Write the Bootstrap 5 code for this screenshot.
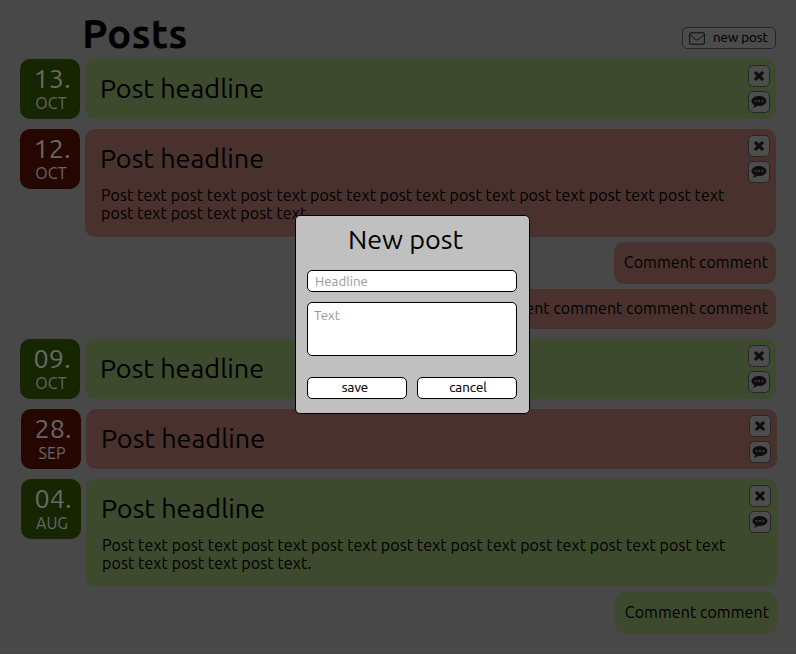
<!DOCTYPE html>
<html lang="en">
<head>
<meta charset="utf-8">
<meta name="viewport" content="width=device-width, initial-scale=1">
<title>Posts</title>
<link href="https://cdn.jsdelivr.net/npm/bootstrap@5.3.0/dist/css/bootstrap.min.css" rel="stylesheet">
<style>
  body { background: #484848; color: #000; font-family: "Ubuntu", "Noto Sans", sans-serif; font-size: 16px; line-height: 18px; height: 654px; overflow: hidden; border-bottom: 2px solid #494449; }
  .board { padding: 0 20px; }
  .board-head { height: 59px; padding-left: 62px; }
  .board-title { font-size: 40.6px; font-weight: 700; line-height: 40px; margin-top: 13px; }
  .tool { border: 1px solid #262626; border-radius: 5px; background: #4b4b4b; color: #000; height: 22px; padding: 0; }
  .new-btn { width: 94px; margin-top: 27px; padding-left: 6px; font-size: 13.3px; line-height: 18px; -webkit-text-stroke: .15px #000; }
  .new-btn span { margin-left: 8px; }
  .tool-sq { width: 22px; background: #4d4d4d; }
  .post-row { gap: 5px; margin-bottom: 10px; }
  .shifted { position: relative; left: 1px; }
  .date-box { width: 60px; height: 60px; border-radius: 10px; padding-top: 4px; color: #686868; }
  .date-day { font-size: 27px; line-height: 31px; padding-left: 13.5px; }
  .date-month { line-height: 18px; padding-left: 2px; }
  .green-date { background: #162600; }
  .red-date { background: #260700; }
  .green-box { background: #3d4a2d; }
  .red-box { background: #49322d; }
  .post-box { border-radius: 10px; min-height: 60px; padding: 11px 6px 0 15px; }
  .post-box h2 { font-size: 27px; line-height: 37px; font-weight: 400; margin: 0; }
  .post-box p { margin: 9px 0 15px 1px; width: 636px; letter-spacing: .095px; }
  .tools { gap: 4px; margin-top: -5px; }
  .reply { border-radius: 10px; padding: 0 8px 0 10px; height: 42px; line-height: 40px; margin-bottom: 5px; letter-spacing: .06px; }
  .reply-last { height: 40px; line-height: 38px; margin-bottom: 10px; }
  .has-replies { margin-bottom: 5px; }
  .dialog-box { position: absolute; left: 295px; top: 215px; width: 235px; height: 199px; background: #c0c0c0; border: 1px solid #000; border-radius: 5px; padding: 5px 12px 0 11px; }
  .dialog-box h2 { font-size: 27px; line-height: 37px; font-weight: 400; padding-right: 13px; margin: 0 0 12px; }
  .field { display: block; width: 210px; height: 22px; border: 1px solid #000; border-radius: 5px; background: #fff; font-size: 13.3px; line-height: 18px; padding: 0 7px; resize: none; outline: none; }
  .field::placeholder { color: #9a9a9a; opacity: 1; }
  .field-area { height: 54px; margin: 10px 0 21px; padding: 4px 6px; }
  .dialog-btn { width: 100px; height: 22px; border: 1px solid #000; border-radius: 5px; background: #fff; color: #000; font-size: 13.3px; line-height: 18px; padding: 0 0 0 2px; -webkit-text-stroke: .15px #000; }
  .save-btn { padding: 0 4px 0 0; }
</style>
</head>
<body>
<svg class="d-none">
  <symbol id="i-x" viewBox="0 0 12 12"><path d="M3 .9 6 3.8 9 .9 11.2 3.1 8.3 6l2.9 2.9L9 11.1 6 8.2 3 11.1.8 8.9 3.7 6 .8 3.1Z" fill="#0e0e0e"/></symbol>
  <symbol id="i-talk" viewBox="0 0 16 14"><path d="M8 1C3.8 1 .5 3.200.5 6c0 1.700 1.100 3.100 2.800 4-.2 1.100-.7 1.900-1.500 2.700 1.900-.1 3.400-.8 4.500-1.900.5.1 1 .1 1.700.1 4.200 0 7.500-2.200 7.500-4.900S12.200 1 8 1Z" fill="#0e0e0e"/><path d="M3.800 5.200h1.800v1.600H3.800zM7.100 5.200h1.800v1.600H7.100zM10.400 5.200h1.800v1.600h-1.800z" fill="#4d4d4d"/></symbol>
</svg>
<main class="board">
  <header class="board-head d-flex justify-content-between align-items-start">
    <h1 class="board-title mb-0">Posts</h1>
    <button class="tool new-btn d-flex align-items-center"><svg width="16" height="13" viewBox="0 0 16 13" fill="none" stroke="#0e0e0e"><rect x=".6" y=".8" width="14.800" height="11.400" rx="1.300"/><path d="M.8 2.500c2 1.900 3.700 3.200 5.700 4.800 1.100.8 1.900.8 3 0 2-1.600 3.700-2.900 5.700-4.800"/></svg><span>new post</span></button>
  </header>

  <section class="post-row d-flex align-items-start">
    <div class="date-box green-date text-center"><div class="date-day text-start">13.</div><div class="date-month">OCT</div></div>
    <article class="post-box green-box flex-grow-1 d-flex justify-content-between align-items-start"><h2>Post headline</h2>
      <div class="tools d-flex flex-column"><button class="tool tool-sq d-flex align-items-center justify-content-center" aria-label="Delete"><svg width="12" height="12"><use href="#i-x"/></svg></button><button class="tool tool-sq d-flex align-items-center justify-content-center" aria-label="Comment"><svg width="16" height="14"><use href="#i-talk"/></svg></button></div></article>
  </section>

  <section class="post-row has-replies d-flex align-items-start">
    <div class="date-box red-date text-center"><div class="date-day text-start">12.</div><div class="date-month">OCT</div></div>
    <article class="post-box red-box flex-grow-1 d-flex justify-content-between align-items-start"><div><h2>Post headline</h2><p>Post text post text post text post text post text post text post text post text post text post text post text post text.</p></div>
      <div class="tools d-flex flex-column"><button class="tool tool-sq d-flex align-items-center justify-content-center" aria-label="Delete"><svg width="12" height="12"><use href="#i-x"/></svg></button><button class="tool tool-sq d-flex align-items-center justify-content-center" aria-label="Comment"><svg width="16" height="14"><use href="#i-talk"/></svg></button></div></article>
  </section>
  <div class="d-flex flex-column align-items-end">
    <div class="reply red-box">Comment comment</div>
    <div class="reply reply-last red-box">Comment comment comment comment</div>
  </div>

  <section class="post-row d-flex align-items-start">
    <div class="date-box green-date text-center"><div class="date-day text-start">09.</div><div class="date-month">OCT</div></div>
    <article class="post-box green-box flex-grow-1 d-flex justify-content-between align-items-start"><h2>Post headline</h2>
      <div class="tools d-flex flex-column"><button class="tool tool-sq d-flex align-items-center justify-content-center" aria-label="Delete"><svg width="12" height="12"><use href="#i-x"/></svg></button><button class="tool tool-sq d-flex align-items-center justify-content-center" aria-label="Comment"><svg width="16" height="14"><use href="#i-talk"/></svg></button></div></article>
  </section>

  <div class="shifted">
    <section class="post-row d-flex align-items-start">
      <div class="date-box red-date text-center"><div class="date-day text-start">28.</div><div class="date-month">SEP</div></div>
      <article class="post-box red-box flex-grow-1 d-flex justify-content-between align-items-start"><h2>Post headline</h2>
        <div class="tools d-flex flex-column"><button class="tool tool-sq d-flex align-items-center justify-content-center" aria-label="Delete"><svg width="12" height="12"><use href="#i-x"/></svg></button><button class="tool tool-sq d-flex align-items-center justify-content-center" aria-label="Comment"><svg width="16" height="14"><use href="#i-talk"/></svg></button></div></article>
    </section>
    <section class="post-row has-replies d-flex align-items-start">
      <div class="date-box green-date text-center"><div class="date-day text-start">04.</div><div class="date-month">AUG</div></div>
      <article class="post-box green-box flex-grow-1 d-flex justify-content-between align-items-start"><div><h2>Post headline</h2><p>Post text post text post text post text post text post text post text post text post text post text post text post text.</p></div>
        <div class="tools d-flex flex-column"><button class="tool tool-sq d-flex align-items-center justify-content-center" aria-label="Delete"><svg width="12" height="12"><use href="#i-x"/></svg></button><button class="tool tool-sq d-flex align-items-center justify-content-center" aria-label="Comment"><svg width="16" height="14"><use href="#i-talk"/></svg></button></div></article>
    </section>
    <div class="d-flex justify-content-end"><div class="reply green-box">Comment comment</div></div>
  </div>
</main>

<div class="dialog-box" role="dialog">
  <h2 class="text-center">New post</h2>
  <input class="field" placeholder="Headline">
  <textarea class="field field-area" placeholder="Text"></textarea>
  <div class="d-flex justify-content-between"><button class="dialog-btn save-btn">save</button><button class="dialog-btn">cancel</button></div>
</div>
<script src="https://cdn.jsdelivr.net/npm/bootstrap@5.3.0/dist/js/bootstrap.bundle.min.js"></script>
</body>
</html>
